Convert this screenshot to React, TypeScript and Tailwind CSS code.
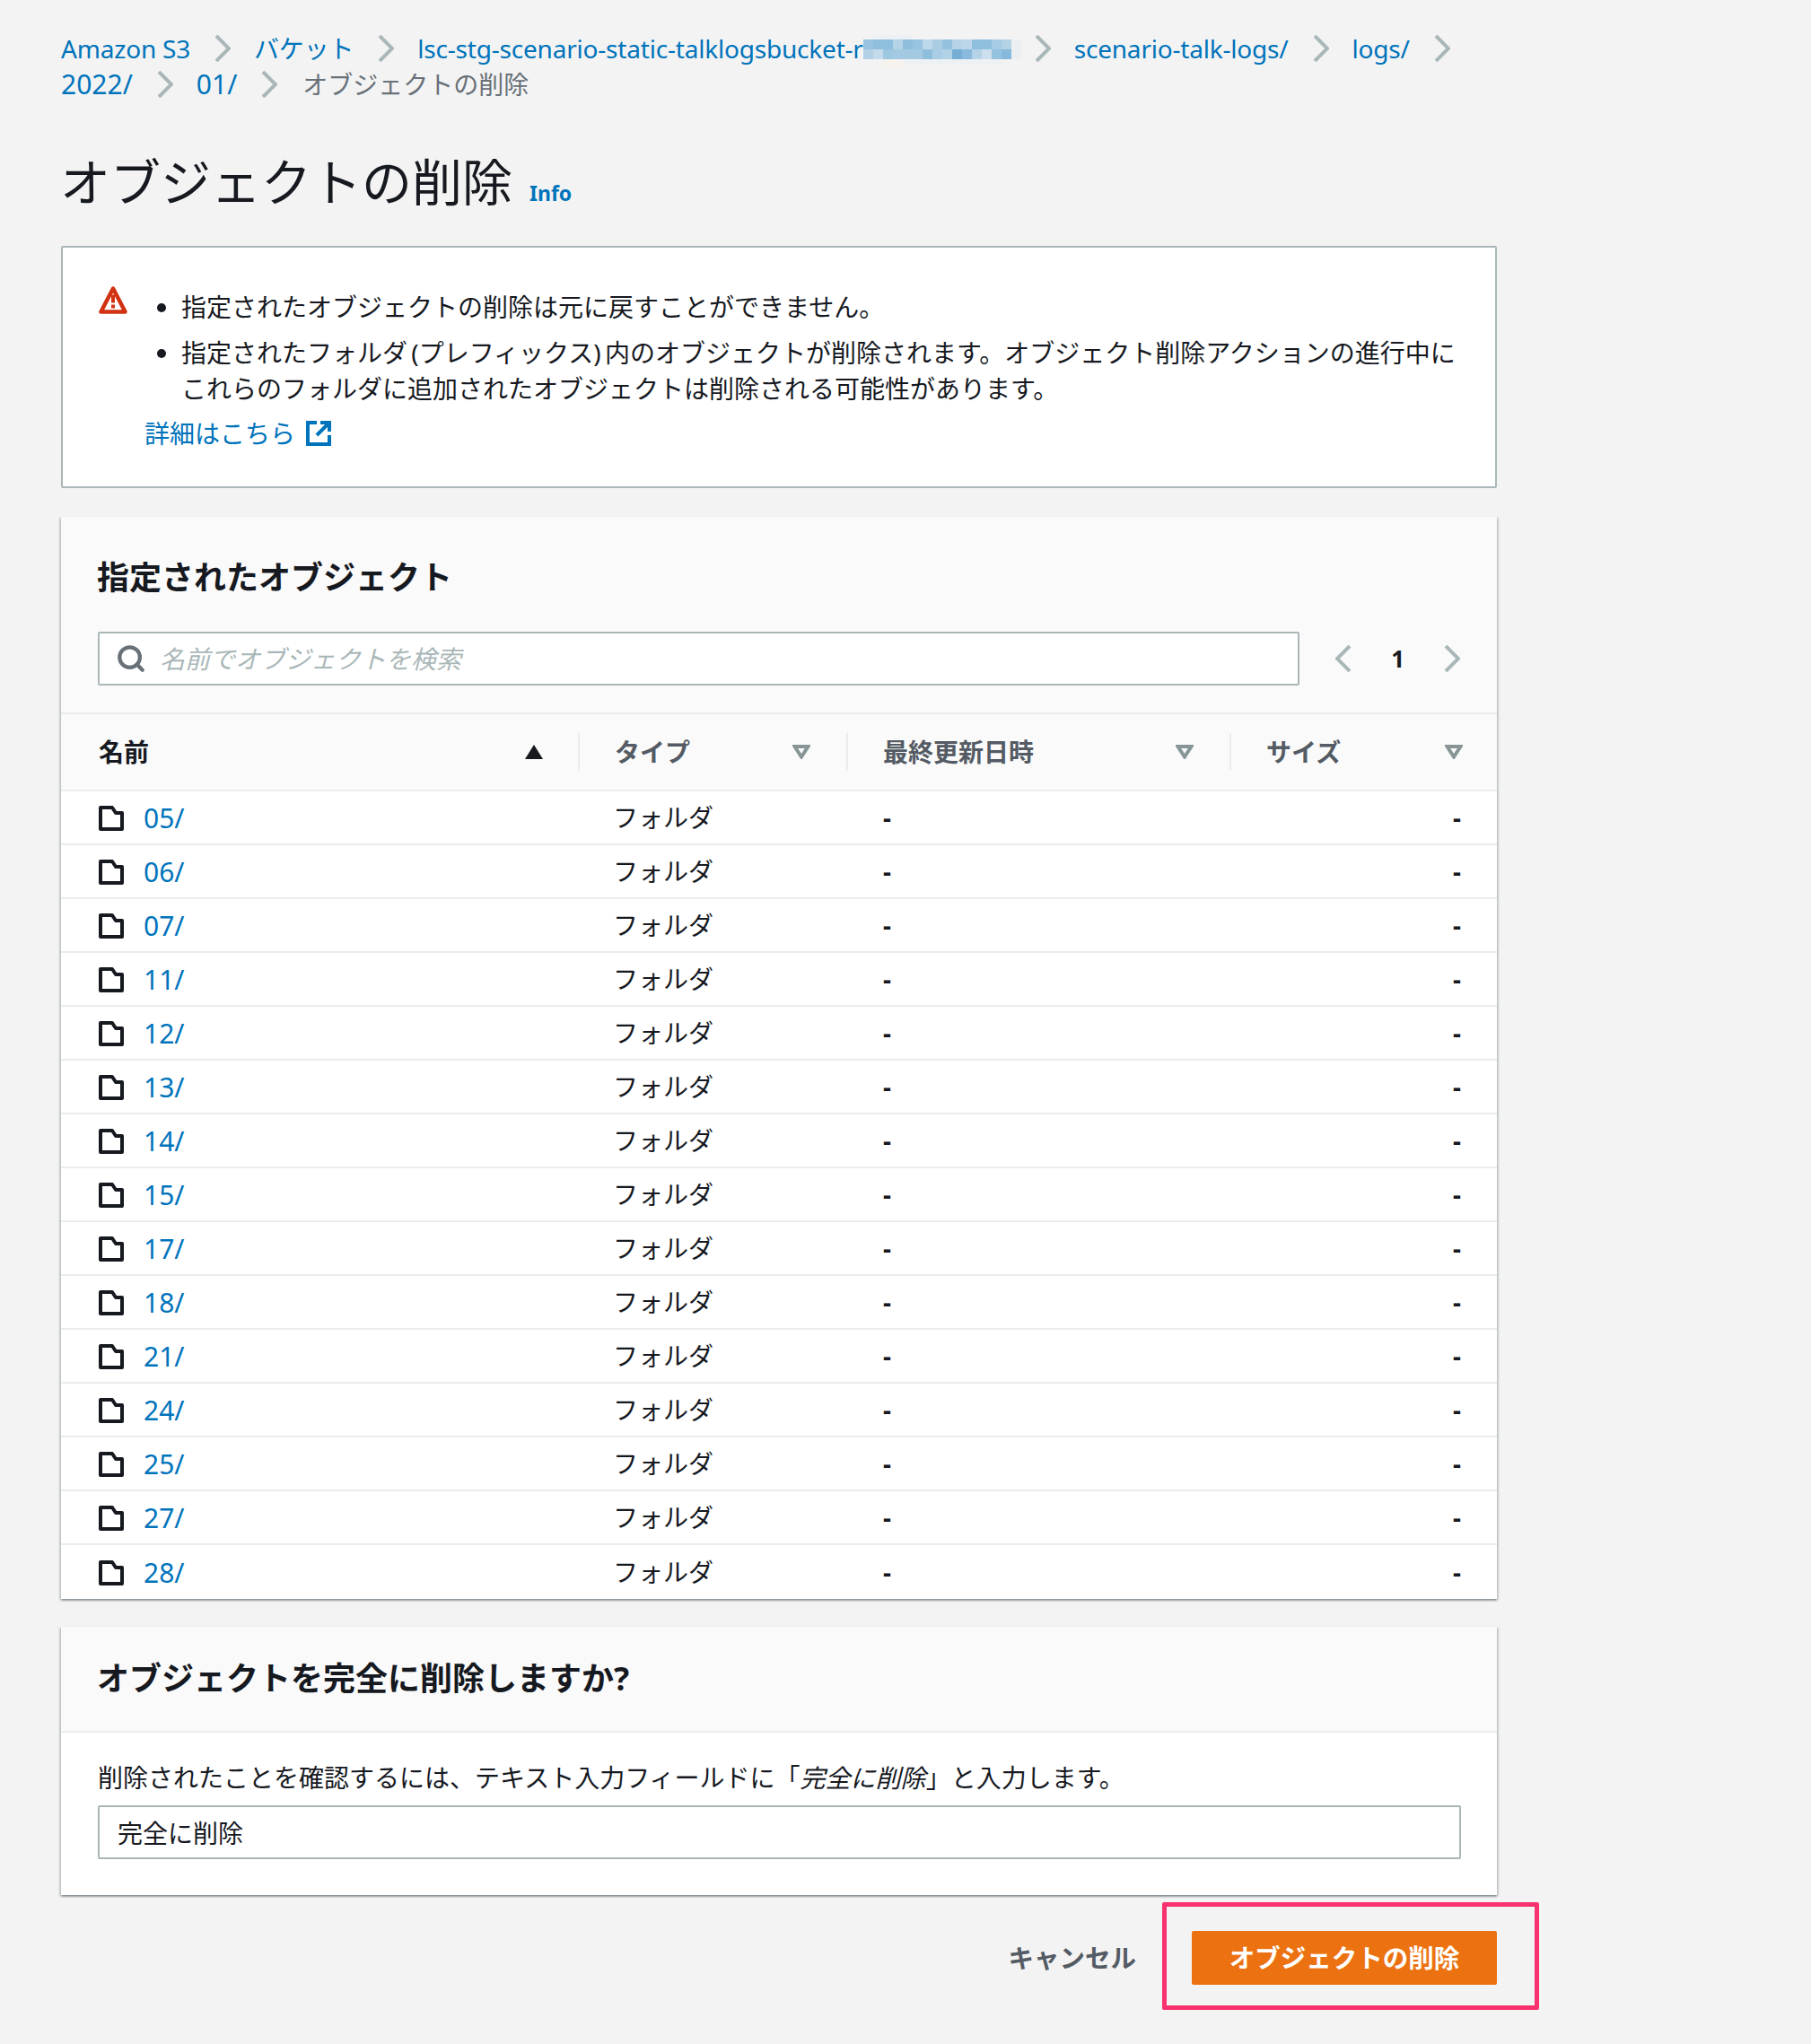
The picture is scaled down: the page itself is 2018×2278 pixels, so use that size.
import { Search } from 'lucide-react'

const folders = ['05/', '06/', '07/', '11/', '12/', '13/', '14/', '15/', '17/', '18/', '21/', '24/', '25/', '27/', '28/']

// mosaic over the redacted part of the bucket name
const mosaicTop = ['#97c3e0', '#8fbfdf', '#8fbfdf', '#b5d3e7', '#8fbedd', '#98c4e1', '#bcd8ea', '#aacde4', '#94c1de', '#b6d3e7', '#bcd7e9', '#8fbfdf', '#8fbfdf', '#a6cbe4', '#b5d3e7']
const mosaicBottom = ['#b2d1e6', '#c3dbea', '#9ec7e2', '#a4cae3', '#a4cae3', '#a4cae3', '#8fbedd', '#a8cde4', '#b2d2e7', '#77aed6', '#88bade', '#b5d3e7', '#cddfed', '#95c2df', '#86b9dc']

function Mosaic() {
  return (
    <svg viewBox="0 0 176 36" className="mt-[6px] -mr-3 h-9 w-[176px]">
      <rect x="10" y="0" width="44" height="5" fill="#eef1f3" />
      <rect x="165" y="5" width="11" height="22" fill="#eceff1" />
      <rect x="22" y="27" width="22" height="9" fill="#f6f2ee" />
      <rect x="44" y="27" width="110" height="6" fill="#eef1f3" />
      {mosaicTop.map((fill, i) => (
        <rect key={i} x={i * 11} y="5" width="11" height="11" fill={fill} />
      ))}
      {mosaicBottom.map((fill, i) => (
        <rect key={i} x={i * 11} y="16" width="11" height="11" fill={fill} />
      ))}
    </svg>
  )
}

function Chevron({ dir = 'right', className = '' }: { dir?: 'right' | 'left'; className?: string }) {
  return (
    <svg viewBox="0 0 18 30" className={`h-[30px] w-[18px] shrink-0 ${className}`} fill="none" stroke="#aab7b8" strokeWidth="4">
      <path d={dir === 'right' ? 'M2 1l14 14L2 29' : 'M16 1L2 15l14 14'} />
    </svg>
  )
}

function Caret() {
  return (
    <svg viewBox="0 0 20 16" className="h-4 w-5 shrink-0" fill="none" stroke="#879596" strokeWidth="4">
      <path d="M2.5 2h15L10 13.5z" />
    </svg>
  )
}

function FolderIcon() {
  return (
    <svg viewBox="0 0 28 28" className="h-7 w-7 shrink-0" fill="none" stroke="#16191f" strokeWidth="4" strokeLinejoin="round">
      <path d="M2 2h13l4 6h7v18H2z" />
    </svg>
  )
}

function Crumb({ label, digits, children }: { label?: string; digits?: boolean; children?: React.ReactNode }) {
  return (
    <>
      <a className={`flex h-10 items-center text-[#0073bb] ${digits ? 'text-[30px]' : 'tracking-[-0.2px]'}`}>
        {label}
        {children}
      </a>
      <Chevron className="ml-[27px] mr-[26px]" />
    </>
  )
}

export default function App() {
  return (
    <div className="min-h-[2278px] bg-[#f3f3f3] pl-[68px] pt-[34px] font-['Noto_Sans','Noto_Sans_CJK_JP',sans-serif] text-[28px] leading-10 text-[#16191f]">
      <div className="w-[1600px]">
        {/* Breadcrumbs */}
        <nav className="flex flex-wrap items-center">
          <Crumb label="Amazon S3" />
          <Crumb label="バケット" />
          <Crumb label="lsc-stg-scenario-static-talklogsbucket-r">
            <Mosaic />
          </Crumb>
          <Crumb label="scenario-talk-logs/" />
          <Crumb label="logs/" />
          <Crumb label="2022/" digits />
          <Crumb label="01/" digits />
          <span className="ml-[2px] text-[#687078]">オブジェクトの削除</span>
        </nav>

        {/* Title */}
        <div className="mt-12 mb-8 -ml-px flex items-baseline">
          <h1 className="text-[56px] leading-20 font-normal">オブジェクトの削除</h1>
          <a className="ml-[19px] text-[23px] leading-8 font-bold text-[#0073bb]">Info</a>
        </div>

        {/* Warning */}
        <div className="flex h-[270px] rounded-[2px] border-2 border-[#aab7b8] bg-white pl-10 pt-[42px]">
          <svg viewBox="0 0 32 32" className="h-8 w-8 shrink-0" fill="none">
            <path d="M16 3.5L2.5 29.5h27z" stroke="#d13212" strokeWidth="4.5" strokeLinejoin="round" />
            <path d="M14 10.5h4v9h-4zM14 21.5h4v4h-4z" fill="#d13212" />
          </svg>
          <div className="ml-[19px]">
            <ul className="ml-[41px] mt-1 list-disc pr-[30px] marker:text-[#16191f]">
              <li className="mb-[11px]">指定されたオブジェクトの削除は元に戻すことができません。</li>
              <li className="[word-spacing:-3px]">指定されたフォルダ (プレフィックス) 内のオブジェクトが削除されます。オブジェクト削除アクションの進行中にこれらのフォルダに追加されたオブジェクトは削除される可能性があります。</li>
            </ul>
            <a className="mt-[10px] flex items-center text-[#0073bb]">
              詳細はこちら
              <svg viewBox="0 0 28 28" className="ml-3 h-7 w-7" fill="none" stroke="#0073bb" strokeWidth="4">
                <path d="M12 2H2v24h24V16M16 2h10v10M26 2L12 16" />
              </svg>
            </a>
          </div>
        </div>

        {/* Objects table */}
        <section className="mt-8 bg-white shadow-[0_2px_2px_0_rgba(0,28,36,0.3),2px_1px_2px_0_rgba(0,28,36,0.15),-2px_1px_2px_0_rgba(0,28,36,0.15)]">
          <div className="h-[220px] border-b-2 border-[#eaeded] bg-[#fafafa] px-[41px]">
            <h2 className="-ml-px pt-11 text-[36px] leading-12 font-bold">指定されたオブジェクト</h2>
            <div className="mt-9 flex items-center">
              <div className="flex h-[60px] w-[1340px] items-center rounded-[2px] border-2 border-[#aab7b8] bg-white pl-[18px]">
                <Search size={34} strokeWidth={3} color="#687078" className="shrink-0" />
                <input className="ml-[15px] w-full italic outline-none placeholder:text-[#aab7b8]" placeholder="名前でオブジェクトを検索" />
              </div>
              <div className="ml-10 flex items-center">
                <Chevron dir="left" />
                <span className="mx-11 text-[26px] font-bold">1</span>
                <Chevron />
              </div>
            </div>
          </div>

          <div className="grid h-[86px] grid-cols-[576px_299px_427px_298px] items-center border-b-2 border-[#eaeded] bg-[#fafafa] font-bold text-[#545b64]">
            <div className="flex h-[42px] items-center justify-between pl-[42px] pr-[39px] text-[#16191f]">
              <span>名前</span>
              <svg viewBox="0 0 20 16" className="h-4 w-5" fill="#16191f">
                <path d="M10 0l10 16H0z" />
              </svg>
            </div>
            <div className="flex h-[42px] items-center justify-between border-l-2 border-[#eaeded] pl-[39px] pr-10">
              <span>タイプ</span>
              <Caret />
            </div>
            <div className="flex h-[42px] items-center justify-between border-l-2 border-[#eaeded] pl-[39px] pr-10">
              <span>最終更新日時</span>
              <Caret />
            </div>
            <div className="flex h-[42px] items-center justify-between border-l-2 border-[#eaeded] pl-[39px] pr-[38px]">
              <span>サイズ</span>
              <Caret />
            </div>
          </div>

          {folders.map((name, i) => (
            <div
              key={name}
              className={`grid h-[60px] grid-cols-[576px_299px_427px_298px] items-center ${i < folders.length - 1 ? 'border-b-2 border-[#eaeded]' : ''}`}
            >
              <div className="mt-[2px] flex items-center pl-[42px]">
                <FolderIcon />
                <a className="ml-[22px] text-[30px] text-[#0073bb]">{name}</a>
              </div>
              <div className="pl-[39px]">フォルダ</div>
              <div className="pl-[41px] font-bold">-</div>
              <div className="pr-[40px] text-right font-bold">-</div>
            </div>
          ))}
        </section>

        {/* Confirmation */}
        <section className="mt-[31px] h-[299px] bg-white shadow-[0_2px_2px_0_rgba(0,28,36,0.3),2px_1px_2px_0_rgba(0,28,36,0.15),-2px_1px_2px_0_rgba(0,28,36,0.15)]">
          <div className="flex h-[118px] items-center border-b-2 border-[#eaeded] bg-[#fafafa] px-[40px]">
            <h2 className="text-[36px] leading-12 font-bold">オブジェクトを完全に削除しますか?</h2>
          </div>
          <div className="px-[41px] pt-[30px]">
            <p>
              削除されたことを確認するには、テキスト入力フィールドに「<em>完全に削除</em>」と入力します。
            </p>
            <input
              defaultValue="完全に削除"
              className="mt-[11px] block h-[60px] w-[1519px] rounded-[2px] border-2 border-[#aab7b8] bg-white px-5 outline-none"
            />
          </div>
        </section>

        {/* Actions */}
        <div className="mt-10 flex items-center justify-end text-[28.5px]">
          <button className="mr-[62px] font-bold text-[#545b64]">キャンセル</button>
          <div className="relative">
            <button className="h-[60px] w-[340px] rounded-[2px] bg-[#ec7211] font-bold text-white">オブジェクトの削除</button>
            <div className="absolute -top-8 -bottom-7 -left-[33px] -right-[47px] rounded-[2px] border-[5px] border-[#f9316f]" />
          </div>
        </div>
      </div>
    </div>
  )
}
